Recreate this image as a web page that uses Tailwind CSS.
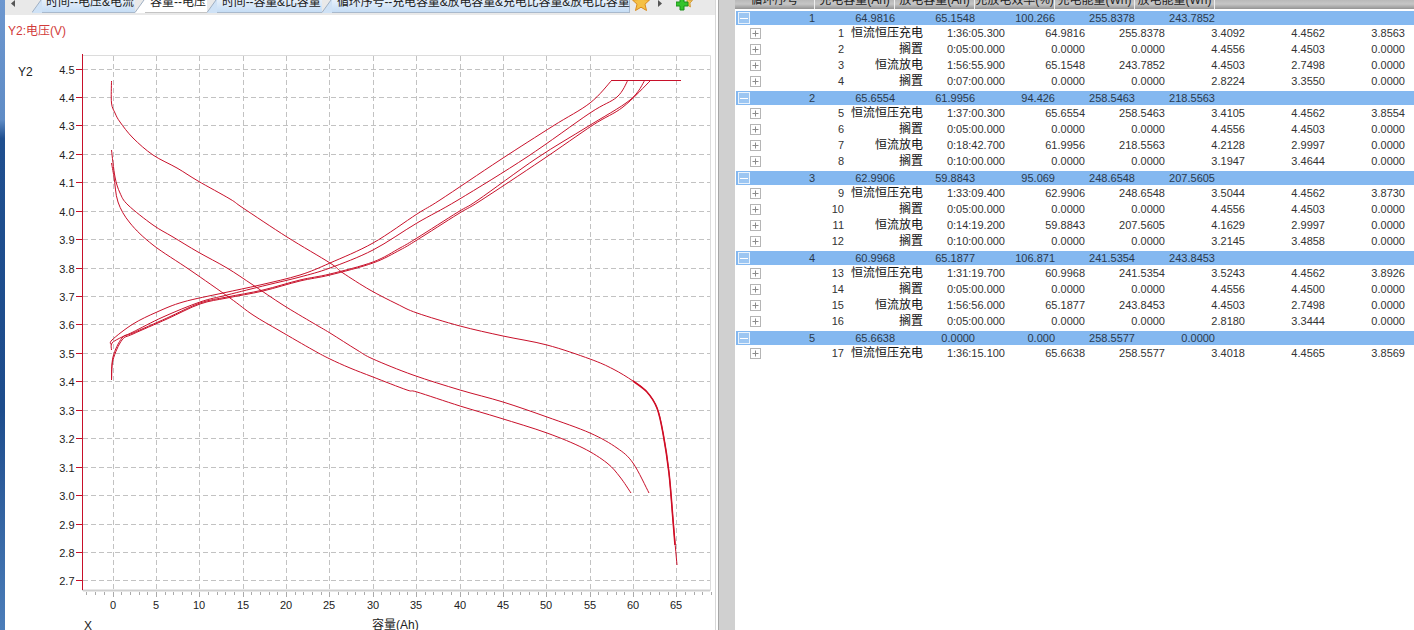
<!doctype html>
<html>
<head>
  <meta charset="UTF-8">
  <meta name="viewport" content="width=device-width, initial-scale=1.0">
  <script src="https://cdn.jsdelivr.net/npm/@tailwindcss/browser@4"></script>
</head>
<body class="bg-white overflow-hidden">
<div class="flex w-[1414px] h-[630px] overflow-hidden font-['Liberation_Sans','Noto_Sans_CJK_SC',sans-serif]">

  <!-- window border -->
  <div class="w-[5px] shrink-0 bg-[linear-gradient(180deg,#6d97cf_0%,#5f8cc6_19%,#1f4f8f_22%,#1d4c8c_65%,#4b7db9_100%)]"></div>

  <!-- chart pane -->
  <div class="w-[710px] shrink-0 flex flex-col">
    <!-- tabs -->
    <div class="h-[15px] shrink-0 bg-[#e9e9e9] flex items-start overflow-hidden text-[12px] leading-[12px] text-[#222]">
      <div class="w-[27px] shrink-0 h-[13px] flex items-start pl-[5px] pt-[0px]">
        <svg width="6" height="8" viewBox="0 0 6 8"><path d="M5 0V7L1 3.5Z" fill="#555"/></svg>
      </div>
      <div class="flex h-[13px]">
        <svg width="10" height="13" viewBox="0 0 10 13" class="shrink-0"><path d="M0 13L9 0H10V13Z" fill="#cfe2f6"/><path d="M0 12.5L9 0" stroke="#9fb0c4" fill="none"/></svg>
        <div class="w-[93px] flex justify-start pl-[4px] border-b border-[#a9b9cc] bg-[linear-gradient(180deg,#e6f0fb,#c6ddf5)]"><span class="-mt-[4px] whitespace-nowrap">时间--电压&amp;电流</span></div>
      </div>
      <div class="flex h-[13px]">
        <svg width="10" height="13" viewBox="0 0 10 13" class="shrink-0"><path d="M0 13L9 0H10V13Z" fill="#fff"/><path d="M0 12.5L9 0" stroke="#9fb0c4" fill="none"/></svg>
        <div class="w-[62px] flex justify-start pl-[5px] bg-white border-b border-[#c4c4c4]"><span class="-mt-[4px] whitespace-nowrap">容量--电压</span></div>
      </div>
      <div class="flex h-[13px]">
        <svg width="10" height="13" viewBox="0 0 10 13" class="shrink-0"><path d="M0 13L9 0H10V13Z" fill="#cfe2f6"/><path d="M0 12.5L9 0" stroke="#9fb0c4" fill="none"/></svg>
        <div class="w-[105px] flex justify-start pl-[5px] border-b border-[#a9b9cc] bg-[linear-gradient(180deg,#e6f0fb,#c6ddf5)]"><span class="-mt-[4px] whitespace-nowrap tracking-[-0.15px]">时间--容量&amp;比容量</span></div>
      </div>
      <div class="flex h-[13px]">
        <svg width="10" height="13" viewBox="0 0 10 13" class="shrink-0"><path d="M0 13L9 0H10V13Z" fill="#cfe2f6"/><path d="M0 12.5L9 0" stroke="#9fb0c4" fill="none"/></svg>
        <div class="w-[298px] flex justify-start pl-[5px] border-b border-r border-[#a9b9cc] bg-[linear-gradient(180deg,#e6f0fb,#c6ddf5)]"><span class="-mt-[4px] whitespace-nowrap tracking-[-0.13px]">循环序号--充电容量&amp;放电容量&amp;充电比容量&amp;放电比容量</span></div>
      </div>
      <!-- favourite, scroll and add buttons -->
      <svg width="18" height="12" viewBox="0 0 18 12" class="ml-[2px] shrink-0"><path d="M9 -6L11.5 -.5L17.5 0L13 4.2L14.5 10.5L9 7.2L3.5 10.5L5 4.2L.5 0L6.5 -.5Z" fill="#f5c044" stroke="#d98a1e"/></svg>
      <svg width="6" height="8" viewBox="0 0 6 8" class="ml-[7px] shrink-0"><path d="M1 0V7L5 3.5Z" fill="#555"/></svg>
      <svg width="17" height="11" viewBox="0 0 17 11" class="ml-[13px] shrink-0"><path d="M11 -4L13 0L16.500 .5L14 3L14.500 7L11 5Z" fill="#f0c050" stroke="#c98f2a" stroke-width=".7"/><path d="M4 -2H8V2H12V6H8V10H4V6H0V2H4Z" fill="#35c42c" stroke="#1f8f1c"/></svg>
    </div>

    <!-- chart -->
    <svg id="chart" width="710" height="615" viewBox="5 15 710 615" class="block bg-white font-['Liberation_Sans','Noto_Sans_CJK_SC',sans-serif]"></svg>
  </div>

  <!-- splitter -->
  <div class="w-[20px] shrink-0 flex">
    <div class="w-[3px] border-l border-[#d8d8d8] bg-white"></div>
    <div class="flex-1 bg-[#d0d0d0] border-l border-[#a6a6a6]"></div>
  </div>

  <!-- step table -->
  <div class="flex-1 flex flex-col">
    <div class="h-[10px] shrink-0 flex overflow-hidden text-[12px] leading-[12px] text-[#222] bg-[linear-gradient(180deg,#b9b9b9,#c6c6c6_40%,#8a8a8a)]">
      <div class="w-[80px] pr-[0px] flex justify-center border-r border-[#eee]"><span class="-mt-[6px] whitespace-nowrap">循环序号</span></div>
      <div class="w-[80px] flex justify-center border-r border-[#eee]"><span class="-mt-[6px] whitespace-nowrap">充电容量(Ah)</span></div>
      <div class="w-[80px] flex justify-center border-r border-[#eee]"><span class="-mt-[6px] whitespace-nowrap">放电容量(Ah)</span></div>
      <div class="w-[80px] flex justify-center border-r border-[#eee]"><span class="-mt-[6px] whitespace-nowrap">充放电效率(%)</span></div>
      <div class="w-[80px] flex justify-center border-r border-[#eee]"><span class="-mt-[6px] whitespace-nowrap">充电能量(Wh)</span></div>
      <div class="w-[80px] flex justify-center border-r border-[#eee]"><span class="-mt-[6px] whitespace-nowrap">放电能量(Wh)</span></div>
    </div>
    <div id="rows" class="-mt-[1px]"></div>
  </div>
</div>

<script>
  // x/y of the plot in page pixels
  const px = v => 112.5 + 8.675 * v;
  const py = v => 68.5 + (4.5 - v) * 284.4;
  const chart = document.getElementById('chart');
  let svg = '';

  // frame and grid
  svg += '<path d="M82 55.500H710.500V590.500H82" fill="none" stroke="#dcdcdc"/>';
  svg += '<path d="M83 590.500H710" stroke="#cfcfcf" stroke-width="2"/>';
  for (let v = 0; v <= 65; v += 5) {
    const x = Math.round(px(v)) + .5;
    svg += `<path d="M${x} 56V590" stroke="#c2c2c2" stroke-dasharray="5 3"/>`;
    svg += `<text x="${x - .5}" y="609" font-size="11" text-anchor="middle" fill="#222">${v}</text>`;
  }
  for (let i = -3; i <= 69; i++) {
    const x = Math.round(px(i)) + .5;
    svg += `<path d="M${x} 592V${i % 5 === 0 ? 597 : 595}" stroke="#aaa"/>`;
  }
  for (let i = 0; i <= 18; i++) {
    const v = 4.5 - i / 10;
    const y = Math.round(py(v)) + .5;
    svg += `<path d="M83 ${y}H710" stroke="#c2c2c2" stroke-dasharray="5 3"/>`;
    svg += `<path d="M76 ${y}H83" stroke="#c8102a"/>`;
    svg += `<text x="74.500" y="${y + 4}" font-size="11" text-anchor="end" fill="#222">${v.toFixed(1)}</text>`;
  }
  svg += '<path d="M82.500 54V590" stroke="#c8102a"/>';

  // axis titles
  svg += '<text x="8" y="35" font-size="12" fill="#d23b3b">Y2:电压(V)</text>';
  svg += '<text x="18" y="76" font-size="12" fill="#222">Y2</text>';
  svg += '<text x="84" y="630" font-size="12" fill="#222">X</text>';
  svg += '<text x="372" y="629" font-size="12" fill="#222">容量(Ah)</text>';

  // turn read-off points into a smooth line (Catmull-Rom to bezier)
  function smooth(points) {
    const p = points.split(' ').map(s => s.split(',').map(Number));
    let d = `M${p[0][0]} ${p[0][1]}`;
    for (let i = 0; i < p.length - 1; i++) {
      const a = p[Math.max(i - 1, 0)], b = p[i], c = p[i + 1], e = p[Math.min(i + 2, p.length - 1)];
      d += `C${b[0] + (c[0] - a[0]) / 6} ${b[1] + (c[1] - a[1]) / 6} ${c[0] - (e[0] - b[0]) / 6} ${c[1] - (e[1] - b[1]) / 6} ${c[0]} ${c[1]}`;
    }
    return d;
  }

  // discharge and charge curves, read off in page pixels
  const curves = [
    '111.500,81 111.500,103 115,113 120,122 133,138 153,155 177,168 198,181 230,199 243,208 287,237 330,263 343,273 370,290 397,304 417,313 460,326 503,336 547,345 590,359 613,369 633,381 647,392 657,408 663,433 669,473 673,520 677,565',
    '111.500,150 115,177 120,193 128,205 153,225 173,237 198,252 227,268 253,285 283,305 313,323 330,333 357,350 373,359 413,375 460,390 503,402 547,417 590,433 617,448 633,463 649,493',
    '111.500,163 114,177 118,202 130,223 153,245 190,270 230,298 253,315 280,331 313,350 330,359 350,368 373,377 407,390 417,392 460,406 500,418 547,433 583,448 607,463 620,477 631,493',
    '111.500,345 112,340 133,324 157,312 183,302 223,293 260,285 300,275 330,263 373,243 417,214 440,200 500,160 553,126 590,103 612,80',
    '111.500,350 112,343 122,337 133,332 163,317 200,302 227,295 267,285 300,277 330,268 373,250 417,223 458,200 527,157 590,113 617,97 628,80',
    '111.500,380 113,357 122,338 133,333 167,318 200,303 227,297 263,290 300,280 330,274 373,262 400,248 417,238 458,212 478,200 537,158 587,127 630,100 645,80',
    '111.500,380 113,360 122,340 133,334 167,319 200,304 227,298 263,291 300,281 330,275 373,263 400,250 417,240 458,214 480,201 542,160 593,125 623,107 651,80'
  ];
  curves.forEach(points => {
    svg += `<path d="${smooth(points)}" fill="none" stroke="#c8102a" stroke-width="1"/>`;
  });
  svg += '<path d="M612 80.500H681" stroke="#c8102a"/>';
  // the end of the first discharge is drawn over twice in the original
  svg += `<path d="${smooth('633,381 647,392 657,408 663,433 669,473 673,520 675,545')}" fill="none" stroke="#d00d25" stroke-width="1.600"/>`;
  chart.innerHTML = svg;

  // table data: a group row, then its steps
  const groups = [
    [['1', '64.9816', '65.1548', '100.266', '255.8378', '243.7852'], [
      ['1', '恒流恒压充电', '1:36:05.300', '64.9816', '255.8378', '3.4092', '4.4562', '3.8563'],
      ['2', '搁置', '0:05:00.000', '0.0000', '0.0000', '4.4556', '4.4503', '0.0000'],
      ['3', '恒流放电', '1:56:55.900', '65.1548', '243.7852', '4.4503', '2.7498', '0.0000'],
      ['4', '搁置', '0:07:00.000', '0.0000', '0.0000', '2.8224', '3.3550', '0.0000']]],
    [['2', '65.6554', '61.9956', '94.426', '258.5463', '218.5563'], [
      ['5', '恒流恒压充电', '1:37:00.300', '65.6554', '258.5463', '3.4105', '4.4562', '3.8554'],
      ['6', '搁置', '0:05:00.000', '0.0000', '0.0000', '4.4556', '4.4503', '0.0000'],
      ['7', '恒流放电', '0:18:42.700', '61.9956', '218.5563', '4.2128', '2.9997', '0.0000'],
      ['8', '搁置', '0:10:00.000', '0.0000', '0.0000', '3.1947', '3.4644', '0.0000']]],
    [['3', '62.9906', '59.8843', '95.069', '248.6548', '207.5605'], [
      ['9', '恒流恒压充电', '1:33:09.400', '62.9906', '248.6548', '3.5044', '4.4562', '3.8730'],
      ['10', '搁置', '0:05:00.000', '0.0000', '0.0000', '4.4556', '4.4503', '0.0000'],
      ['11', '恒流放电', '0:14:19.200', '59.8843', '207.5605', '4.1629', '2.9997', '0.0000'],
      ['12', '搁置', '0:10:00.000', '0.0000', '0.0000', '3.2145', '3.4858', '0.0000']]],
    [['4', '60.9968', '65.1877', '106.871', '241.5354', '243.8453'], [
      ['13', '恒流恒压充电', '1:31:19.700', '60.9968', '241.5354', '3.5243', '4.4562', '3.8926'],
      ['14', '搁置', '0:05:00.000', '0.0000', '0.0000', '4.4556', '4.4500', '0.0000'],
      ['15', '恒流放电', '1:56:56.000', '65.1877', '243.8453', '4.4503', '2.7498', '0.0000'],
      ['16', '搁置', '0:05:00.000', '0.0000', '0.0000', '2.8180', '3.3444', '0.0000']]],
    [['5', '65.6638', '0.0000', '0.000', '258.5577', '0.0000'], [
      ['17', '恒流恒压充电', '1:36:15.100', '65.6638', '258.5577', '3.4018', '4.4565', '3.8569']]]
  ];

  const minusIcon = '<svg width="12" height="12" viewBox="0 0 12 12" class="absolute left-[2px] top-[1px]"><rect x=".5" y=".5" width="11" height="11" fill="#9cc6f2" stroke="#e8f2fc"/><path d="M2 6.500H10" stroke="#fff"/></svg>';
  const plusIcon = '<svg width="11" height="11" viewBox="0 0 11 11" class="absolute left-[15px] top-[3px]"><rect x=".5" y=".5" width="10" height="10" fill="#fff" stroke="#b5b5b5"/><path d="M2.500 5.500H8.500M5.500 2.500V8.500" stroke="#8c8c8c"/></svg>';

  let html = '';
  groups.forEach(([band, steps]) => {
    html += `<div class="h-[16px] pt-[2px] bg-white"><div class="relative h-[14px] ml-[1px] pl-[79px] bg-[#84b8f0] flex text-[11px] leading-[14px] text-[#2b3a4c]">${minusIcon}` +
      band.map((value, i) => `<div class="${i === 0 ? 'w-[0px]' : 'w-[80px]'} text-right whitespace-nowrap flex justify-end">${value}</div>`).join('') +
      '</div></div>';
    steps.forEach(step => {
      html += `<div class="relative h-[16px] pl-[30px] flex text-[11px] leading-[16px] text-[#333]">${plusIcon}` +
        step.map((value, i) => `<div class="${i === 0 ? 'w-[79px]' : i === 1 ? 'w-[79px] text-[12px] text-[#111]' : i === 2 ? 'w-[82px]' : 'w-[80px]'} text-right whitespace-nowrap">${value}</div>`).join('') +
        '</div>';
    });
  });
  document.getElementById('rows').innerHTML = html;
</script>
</body>
</html>
